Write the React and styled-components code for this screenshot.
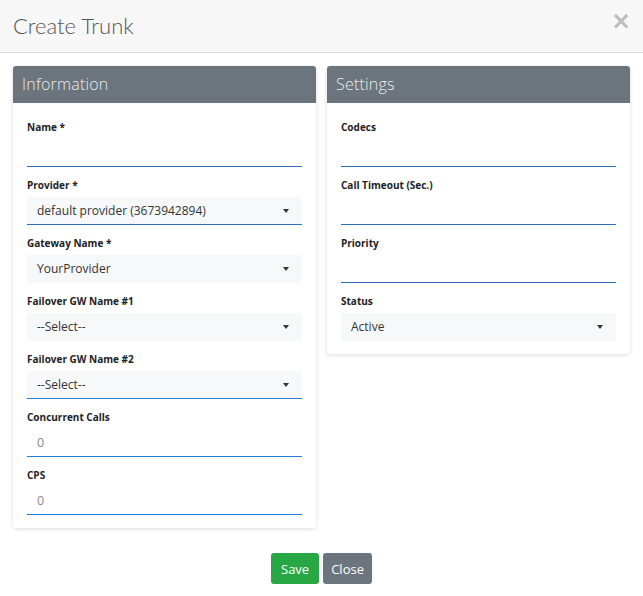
import React from 'react';
import styled, { createGlobalStyle } from 'styled-components';

const GlobalStyle = createGlobalStyle`
  html, body {
    margin: 0;
    padding: 0;
    background: #fff;
  }
  body {
    font-family: "Open Sans", "Noto Sans", sans-serif;
    color: #333;
  }
  * { box-sizing: border-box; }
`;

const Modal = styled.div`
  width: 643px;
  height: 596px;
  background: #fff;
  display: flex;
  flex-direction: column;
`;

const Header = styled.div`
  height: 53px;
  background: #f7f7f7;
  border-bottom: 1px solid #dcdcdc;
  display: flex;
  align-items: center;
  justify-content: space-between;
  padding: 0 13px 2px 13px;
`;

const Title = styled.h4`
  margin: 0;
  font-family: Lato, "Open Sans", sans-serif;
  font-weight: 300;
  font-size: 22px;
  color: #555;
`;

const CloseX = styled.span`
  font-family: "DejaVu Sans", sans-serif;
  font-weight: 700;
  font-size: 24px;
  color: #bcbcbc;
  line-height: 1;
  margin-top: -8px;
  margin-right: -1px;
`;

const Body = styled.div`
  display: grid;
  grid-template-columns: 303px 303px;
  column-gap: 11px;
  align-items: start;
  padding: 13px 13px 0 13px;
`;

const Card = styled.div`
  background: #fff;
  border-radius: 3px;
  box-shadow: 0 1px 4px rgba(0, 0, 0, 0.14);
  overflow: hidden;
`;

const CardHeader = styled.div`
  height: 37px;
  background: #6c757d;
  color: #e9ecef;
  font-family: "Open Sans", sans-serif;
  font-weight: 300;
  font-size: 16px;
  display: flex;
  align-items: center;
  padding: 0 9px 1px 9px;
  letter-spacing: 0.2px;
`;

const CardBody = styled.div`
  padding: 17px 14px 13px 14px;
  display: flex;
  flex-direction: column;
  gap: 11px;
`;

const Field = styled.div`
  display: flex;
  flex-direction: column;
`;

const Label = styled.label`
  font-family: "Open Sans", sans-serif;
  font-weight: 700;
  font-size: 10px;
  color: #222;
  height: 15px;
  line-height: 15px;
  margin-bottom: 4px;
`;

const Input = styled.div`
  height: 28px;
  border-bottom: 1px solid ${({ $line }) => $line || '#2c6fbe'};
  display: flex;
  align-items: center;
  padding: 0 10px;
  font-size: 12.5px;
  color: #888;
`;

const Select = styled.div`
  height: 28px;
  background: #f7f8fa;
  border-bottom: 1px solid ${({ $line }) => $line || 'transparent'};
  display: flex;
  align-items: center;
  justify-content: space-between;
  padding: 0 10px 0 10px;
  font-size: 12px;
  color: #333;
`;

const Caret = styled.span`
  width: 0;
  height: 0;
  border-left: 3.5px solid transparent;
  border-right: 3.5px solid transparent;
  border-top: 4px solid #333;
  margin-right: 3px;
`;

const Footer = styled.div`
  display: flex;
  justify-content: center;
  gap: 4px;
  padding-top: 25px;
  padding-left: 0;
`;

const Button = styled.button`
  height: 31px;
  border: none;
  border-radius: 3px;
  padding: 0 ${({ $pad }) => $pad || 10}px;
  font-family: "Open Sans", sans-serif;
  font-size: 13px;
  color: #fff;
  background: ${({ $bg }) => $bg};
  cursor: pointer;
`;

const info = [
  { label: 'Name *', type: 'input' },
  { label: 'Provider *', type: 'select', value: 'default provider (3673942894)', line: '#2c6fbe' },
  { label: 'Gateway Name *', type: 'select', value: 'YourProvider' },
  { label: 'Failover GW Name #1', type: 'select', value: '--Select--' },
  { label: 'Failover GW Name #2', type: 'select', value: '--Select--', line: '#1e7fe0' },
  { label: 'Concurrent Calls', type: 'input', value: '0', line: '#1e7fe0' },
  { label: 'CPS', type: 'input', value: '0', line: '#1e7fe0' },
];

const settings = [
  { label: 'Codecs', type: 'input' },
  { label: 'Call Timeout (Sec.)', type: 'input' },
  { label: 'Priority', type: 'input' },
  { label: 'Status', type: 'select', value: 'Active' },
];

const FormField = ({ label, type, value, line }) => (
  <Field>
    <Label>{label}</Label>
    {type === 'select' ? (
      <Select $line={line}>
        <span>{value}</span>
        <Caret />
      </Select>
    ) : (
      <Input $line={line}>{value}</Input>
    )}
  </Field>
);

const Panel = ({ title, fields }) => (
  <Card>
    <CardHeader>{title}</CardHeader>
    <CardBody>
      {fields.map((f) => (
        <FormField key={f.label} {...f} />
      ))}
    </CardBody>
  </Card>
);

export default function App() {
  return (
    <>
      <GlobalStyle />
      <Modal>
        <Header>
          <Title>Create Trunk</Title>
          <CloseX>×</CloseX>
        </Header>
        <Body>
          <Panel title="Information" fields={info} />
          <Panel title="Settings" fields={settings} />
        </Body>
        <Footer>
          <Button $bg="#28a745" $pad={10}>Save</Button>
          <Button $bg="#6c757d" $pad={8}>Close</Button>
        </Footer>
      </Modal>
    </>
  );
}
